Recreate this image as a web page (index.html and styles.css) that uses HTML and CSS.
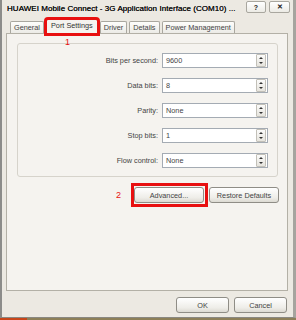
FILE: index.html
```html
<!DOCTYPE html>
<html lang="en">
<head>
<meta charset="UTF-8">
<title>HUAWEI Mobile Connect - 3G Application Interface (COM10) Properties</title>
<link rel="stylesheet" href="styles.css">
</head>
<body>
    <div class="window">
        <div class="titlebar">
            <span class="title">HUAWEI Mobile Connect - 3G Application Interface (COM10) ...</span>
            <div class="title-buttons">
                <span class="tbtn">?</span>
                <span class="tbtn tbtn-close">&#10005;</span>
            </div>
        </div>
        <div class="tabs">
            <span class="tab">General</span>
            <span class="tab selected">Port Settings</span>
            <span class="tab">Driver</span>
            <span class="tab">Details</span>
            <span class="tab">Power Management</span>
        </div>
        <div class="panel">
            <span class="mark mark-1">1</span>
            <div class="group">
                <label>Bits per second:</label>
                <div class="combo"><span>9600</span><i class="spin"></i></div>
                <label>Data bits:</label>
                <div class="combo"><span>8</span><i class="spin"></i></div>
                <label>Parity:</label>
                <div class="combo"><span>None</span><i class="spin"></i></div>
                <label>Stop bits:</label>
                <div class="combo"><span>1</span><i class="spin"></i></div>
                <label>Flow control:</label>
                <div class="combo"><span>None</span><i class="spin"></i></div>
            </div>
            <div class="panel-buttons">
                <span class="mark">2</span>
                <span class="highlight"><button class="btn btn-wide">Advanced...</button></span>
                <button class="btn btn-wide">Restore Defaults</button>
            </div>
        </div>
        <div class="dialog-buttons">
            <button class="btn btn-ok">OK</button>
            <button class="btn btn-ok">Cancel</button>
        </div>
    </div>
    <div class="taskbar"><span class="start"></span></div>
</body>
</html>
```
FILE: styles.css
```css
body {
    margin: 0;
    font-family: "Liberation Sans", Arial, sans-serif;
    font-size: 7.3px;
    color: #222;
    background: #8d7f58;
}
.window {
    height: 318px;
    box-sizing: border-box;
    border-left: 2px solid #8c8c8a;
    border-right: 3px solid #a6a49e;
    border-bottom: 1px solid #8a8882;
    background: #ece9e2;
    display: flex;
    flex-direction: column;
}
.titlebar {
    height: 17px;
    display: flex;
    align-items: center;
    padding-left: 5px;
    padding-right: 3px;
}
.title {
    font-size: 8px;
    color: #111;
    letter-spacing: 0.05px;
    text-shadow: 0 0 0.3px #111;
}
.title-buttons {
    margin-left: auto;
    display: flex;
    gap: 3px;
    align-self: flex-start;
    padding-top: 1px;
}
.tbtn {
    width: 18px;
    height: 10px;
    border: 1px solid #a9a79f;
    border-radius: 2px;
    background: linear-gradient(#ffffff, #ecebe5);
    display: flex;
    align-items: center;
    justify-content: center;
    font-size: 7px;
    font-weight: bold;
    color: #222;
}
.tbtn-close {
    width: 19px;
    font-size: 7px;
}
.tabs {
    height: 16px;
    display: flex;
    align-items: flex-end;
    padding-left: 8px;
    gap: 2px;
    position: relative;
    z-index: 1;
}
.tab {
    height: 11px;
    line-height: 11px;
    padding: 0 3px;
    border: 1px solid #a9a79f;
    border-bottom: none;
    border-radius: 2px 2px 0 0;
    background: linear-gradient(#fdfdfb, #ecebe6);
    color: #444;
}
.tab.selected {
    height: 14px;
    line-height: 12px;
    padding: 0 4px;
    background: #f5f3ef;
    color: #333;
    margin-bottom: -1px;
    outline: 3px solid #e81010;
    outline-offset: -1px;
}
.panel {
    position: relative;
    height: 258px;
    margin: 0 5px 0 4px;
    border: 1px solid #b3b0a6;
    background: #f5f3ef;
    padding: 9px 9px 0 10px;
    box-sizing: border-box;
}
.mark {
    color: #e81010;
    font-size: 9px;
    margin-right: 10px;
    align-self: center;
}
.mark-1 {
    position: absolute;
    left: 58px;
    top: 3px;
    margin: 0;
}
.group {
    height: 134px;
    box-sizing: border-box;
    border: 1px solid #d6d3cb;
    border-radius: 3px;
    padding: 9px 9px 0 0;
    display: grid;
    grid-template-columns: 1fr 106px;
    grid-auto-rows: 15px;
    column-gap: 4px;
    row-gap: 10px;
    align-items: center;
}
.group label {
    text-align: right;
    color: #444;
}
.combo {
    height: 15px;
    box-sizing: border-box;
    border: 1px solid #a4abb3;
    background: #fff;
    display: flex;
    align-items: center;
    padding-left: 3px;
    color: #444;
}
.combo span {
    flex: 1;
}
.spin {
    width: 8px;
    height: 11px;
    margin-right: 1px;
    border: 1px solid #c2c0b8;
    border-radius: 1px;
    background: linear-gradient(#fbfbfa, #e6e4dd);
    position: relative;
}
.spin::before,
.spin::after {
    content: "";
    position: absolute;
    left: 2px;
    border-left: 2px solid transparent;
    border-right: 2px solid transparent;
}
.spin::before {
    top: 2px;
    border-bottom: 2px solid #333;
}
.spin::after {
    bottom: 2px;
    border-top: 2px solid #333;
}
.panel-buttons {
    display: flex;
    justify-content: flex-end;
    align-items: center;
    margin-top: 6px;
    margin-right: -1px;
}
.highlight {
    border: 3px solid #e81010;
    padding: 1px 1px 1px 0;
    margin-right: 1px;
    display: flex;
}
.btn {
    height: 16px;
    box-sizing: border-box;
    border: 1px solid #8f8d86;
    border-radius: 3px;
    background: linear-gradient(#ffffff, #eeede8 70%, #dcdad2);
    font-family: "Liberation Sans", Arial, sans-serif;
    font-size: 7.3px;
    color: #444;
    padding: 0;
}
.btn-wide {
    width: 70px;
}
.dialog-buttons {
    display: flex;
    justify-content: flex-end;
    gap: 5px;
    padding: 6px 6px 0 0;
}
.btn-ok {
    width: 53px;
}
.taskbar {
    height: 2px;
    background: #8d7f58;
}
.start {
    display: block;
    width: 27px;
    height: 2px;
    background: #c8461a;
}
```
